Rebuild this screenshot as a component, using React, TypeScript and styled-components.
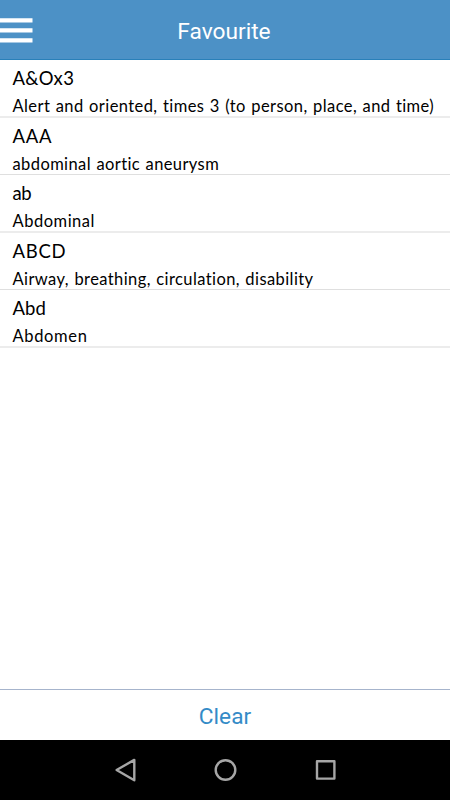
import React from 'react';
import styled, { createGlobalStyle } from 'styled-components';

const GlobalStyle = createGlobalStyle`
  *, *::before, *::after { box-sizing: border-box; }
  body { margin: 0; background: #fff; }
`;

const Screen = styled.div`
  width: 100%;
  height: 100vh;
  display: flex;
  flex-direction: column;
  background: #fff;
  overflow: hidden;
`;

const Header = styled.header`
  flex: none;
  height: 60px;
  display: grid;
  grid-template-columns: 40px 1fr 42px;
  align-items: center;
  background: #4c91c6;
  border-bottom: 1px solid #2980b9;
`;

const MenuButton = styled.button`
  display: flex;
  padding: 0;
  border: 0;
  background: none;
`;

const Title = styled.h1`
  margin: 0;
  padding-top: 4px;
  text-align: center;
  color: #fff;
  font: 400 22.7px/28px Roboto, sans-serif;
`;

const List = styled.ul`
  flex: 1;
  margin: 0;
  padding: 0;
  list-style: none;
`;

const Row = styled.li`
  height: 57.5px;
  padding: 4px 0 0 12.5px;
  border-bottom: 1px solid #dfdfdf;
  color: #000;
  font-family: 'Gill Sans', 'Gill Sans MT', Lato, sans-serif;
  font-variant-ligatures: none;
  white-space: nowrap;

  &:nth-child(odd) {
    border-bottom: 2px solid #ececec;
  }
`;

const Term = styled.div<{ $tracking: number }>`
  font-size: 18.5px;
  line-height: 28px;
  letter-spacing: ${(p) => p.$tracking}px;
`;

const Meaning = styled.div<{ $tracking: number }>`
  padding-top: 1px;
  font-size: 16.5px;
  line-height: 27px;
  letter-spacing: ${(p) => p.$tracking}px;
  word-spacing: 0.8px;
`;

const Footer = styled.footer`
  flex: none;
  height: 51px;
  display: flex;
  border-top: 1px solid #a6b4cc;
`;

const ClearButton = styled.button`
  flex: 1;
  padding: 4px 0 0;
  border: 0;
  background: #fff;
  color: #348bc7;
  font: 400 22.7px/28px Roboto, sans-serif;
`;

const NavBar = styled.nav`
  flex: none;
  height: 60px;
  display: flex;
  align-items: center;
  justify-content: center;
  gap: 76px;
  background: #000;
`;

const NavIcon = styled.svg`
  display: block;
  width: 24px;
  height: 26px;
  fill: none;
  stroke: #a6a6a6;
  stroke-width: 2.4;
  stroke-linejoin: round;
`;

const entries = [
  { term: 'A&Ox3', termTracking: 0.3, meaning: 'Alert and oriented, times 3 (to person, place, and time)', tracking: 0.42 },
  { term: 'AAA', termTracking: 0.75, meaning: 'abdominal aortic aneurysm', tracking: 0.4 },
  { term: 'ab', termTracking: -0.5, meaning: 'Abdominal', tracking: 0.52 },
  { term: 'ABCD', termTracking: 0.75, meaning: 'Airway, breathing, circulation, disability', tracking: 0.41 },
  { term: 'Abd', termTracking: 0.1, meaning: 'Abdomen', tracking: 0.65 },
];

export default function App() {
  return (
    <Screen>
      <GlobalStyle />
      <Header>
        <MenuButton aria-label="Menu">
          <svg width="34" height="28" viewBox="0 0 34 28">
            <path d="M0 2.2h32.5v4.2H0zM0 12.2h32.5v4.2H0zM0 22.2h32.5v4.2H0z" fill="#fff" />
          </svg>
        </MenuButton>
        <Title>Favourite</Title>
      </Header>
      <List>
        {entries.map((e) => (
          <Row key={e.term}>
            <Term $tracking={e.termTracking}>{e.term}</Term>
            <Meaning $tracking={e.tracking}>{e.meaning}</Meaning>
          </Row>
        ))}
      </List>
      <Footer>
        <ClearButton>Clear</ClearButton>
      </Footer>
      <NavBar>
        <NavIcon viewBox="0 0 24 26"><path d="M21.3 2.9v20.4L3.6 13z" /></NavIcon>
        <NavIcon viewBox="0 0 24 26"><circle cx="12.5" cy="13" r="9.8" /></NavIcon>
        <NavIcon viewBox="0 0 24 26"><path d="M4 4.2h17.4v17.4H4z" /></NavIcon>
      </NavBar>
    </Screen>
  );
}
